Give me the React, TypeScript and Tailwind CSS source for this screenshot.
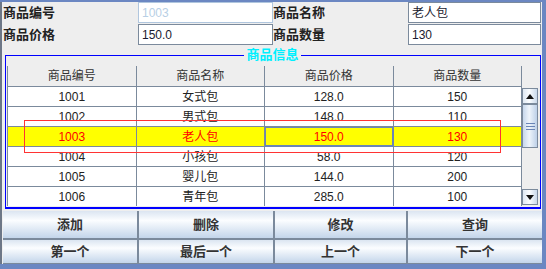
import React from "react";

const rows = [
  ["1001", "女式包", "128.0", "150"],
  ["1002", "男式包", "148.0", "110"],
  ["1003", "老人包", "150.0", "130"],
  ["1004", "小孩包", "58.0", "120"],
  ["1005", "婴儿包", "144.0", "200"],
  ["1006", "青年包", "285.0", "100"],
];

const font = "font-['Liberation_Sans','Noto_Sans_CJK_SC',sans-serif]";

function Label({ text }: { text: string }) {
  return (
    <div className="flex items-center text-[13px] leading-[14px] font-bold text-[#222]">
      {text}
    </div>
  );
}

function Field({ value, disabled }: { value: string; disabled?: boolean }) {
  return (
    <div
      className={
        "flex items-center bg-white pl-[3px] text-[12px] border " +
        (disabled ? "border-[#b0c6de] text-[#b8cfe5]" : "border-[#7b8a9c] text-[#1a1a2e]")
      }
    >
      {value}
    </div>
  );
}

function Arrow({ up }: { up?: boolean }) {
  return (
    <div className="h-[16px] w-full border border-[#7b8a9c] bg-[linear-gradient(to_right,#dfe8f3,#fbfdff_45%,#c9d8ea)] flex items-center justify-center">
      <svg width="8" height="5" viewBox="0 0 8 5">
        {up ? <path d="M0 5 L4 0 L8 5 Z" fill="#111" /> : <path d="M0 0 L8 0 L4 5 Z" fill="#111" />}
      </svg>
    </div>
  );
}

export default function App() {
  return (
    <div className={`${font} relative w-[546px] h-[269px] bg-[#6b87c2] pt-[2px] pr-[4px] pb-[5px] flex`}>
      <div className="flex-1 flex flex-col bg-[#eeeeee] border-l-2 border-[#6d7787]">
        {/* Form */}
        <div className="ml-[1px] grid grid-cols-[135px_135px_135px_133px] grid-rows-[21px_21px] gap-y-[1px]">
          <Label text="商品编号" />
          <Field value="1003" disabled />
          <Label text="商品名称" />
          <Field value="老人包" />
          <Label text="商品价格" />
          <Field value="150.0" />
          <Label text="商品数量" />
          <Field value="130" />
        </div>

        {/* Titled panel */}
        <fieldset className="mt-[3px] ml-[3px] mr-[1px] border border-b-2 border-[#0000ff] pt-[4px] pb-[1px] pl-[1px] pr-[2px]">
          <legend className="mx-auto px-[2px] text-[13px] leading-[14px] font-bold text-[#00f0ff]">
            商品信息
          </legend>
          <div className="flex">
            <div className="flex-1 border-l border-[#7b8a9c]">
              <div className="grid grid-cols-4 h-[21px] bg-[#eeeeee]">
                {["商品编号", "商品名称", "商品价格", "商品数量"].map((h) => (
                  <div
                    key={h}
                    className="flex items-center justify-center border-r border-b border-[#7b8a9c] text-[12px] text-[#333]"
                  >
                    {h}
                  </div>
                ))}
              </div>
              <div className="h-[119px] overflow-hidden bg-white">
                {rows.map((r, i) => {
                  const sel = i === 2;
                  return (
                    <div
                      key={r[0]}
                      className={"grid grid-cols-4 h-[20px] " + (sel ? "bg-[#ffff00]" : "bg-white")}
                    >
                      {r.map((c, j) => {
                        const focus = sel && j === 2;
                        return (
                          <div
                            key={j}
                            className={
                              "flex items-center justify-center border-r border-b text-[12px] " +
                              (sel ? "text-[#ff0000] " : "text-[#222] ") +
                              (focus
                                ? "border-[#6a85b6] shadow-[inset_0_0_0_1px_#6a85b6]"
                                : "border-[#7b8a9c]")
                            }
                          >
                            {c}
                          </div>
                        );
                      })}
                    </div>
                  );
                })}
              </div>
            </div>
            {/* Scrollbar */}
            <div className="w-[16px] flex flex-col">
              <div className="h-[21px]" />
              <div className="h-[119px] flex flex-col pt-[1px] pb-[1px]">
                <Arrow up />
                <div className="h-[44px] border border-[#7b8a9c] bg-[linear-gradient(to_right,#c7d7ec,#eef4fb_45%,#bdd0e8)] flex flex-col items-center justify-center gap-[2px]">
                  <div className="w-[9px] h-[1px] bg-[#6a85b6]" />
                  <div className="w-[9px] h-[1px] bg-[#6a85b6]" />
                  <div className="w-[9px] h-[1px] bg-[#6a85b6]" />
                </div>
                <div className="flex-1 bg-[#eeeeee]" />
                <Arrow />
              </div>
            </div>
          </div>
        </fieldset>

        {/* Buttons */}
        <div className="mt-[2px] ml-[1px] grid grid-cols-[134px_134px_131px_134px] grid-rows-[27px_23px] gap-[2px] bg-[#7b8a9c] border-b border-[#7b8a9c]">
          {["添加", "删除", "修改", "查询", "第一个", "最后一个", "上一个", "下一个"].map((b) => (
            <div
              key={b}
              className="flex items-center justify-center text-[13px] font-bold text-[#333] bg-[linear-gradient(to_bottom,#dbe5f1_0%,#fbfdff_35%,#c3d5ea_100%)]"
            >
              {b}
            </div>
          ))}
        </div>
      </div>

      {/* Red annotation rectangle */}
      <div className="absolute left-[24px] top-[120px] w-[477px] h-[33px] border border-[#ff3333] pointer-events-none" />
    </div>
  );
}
